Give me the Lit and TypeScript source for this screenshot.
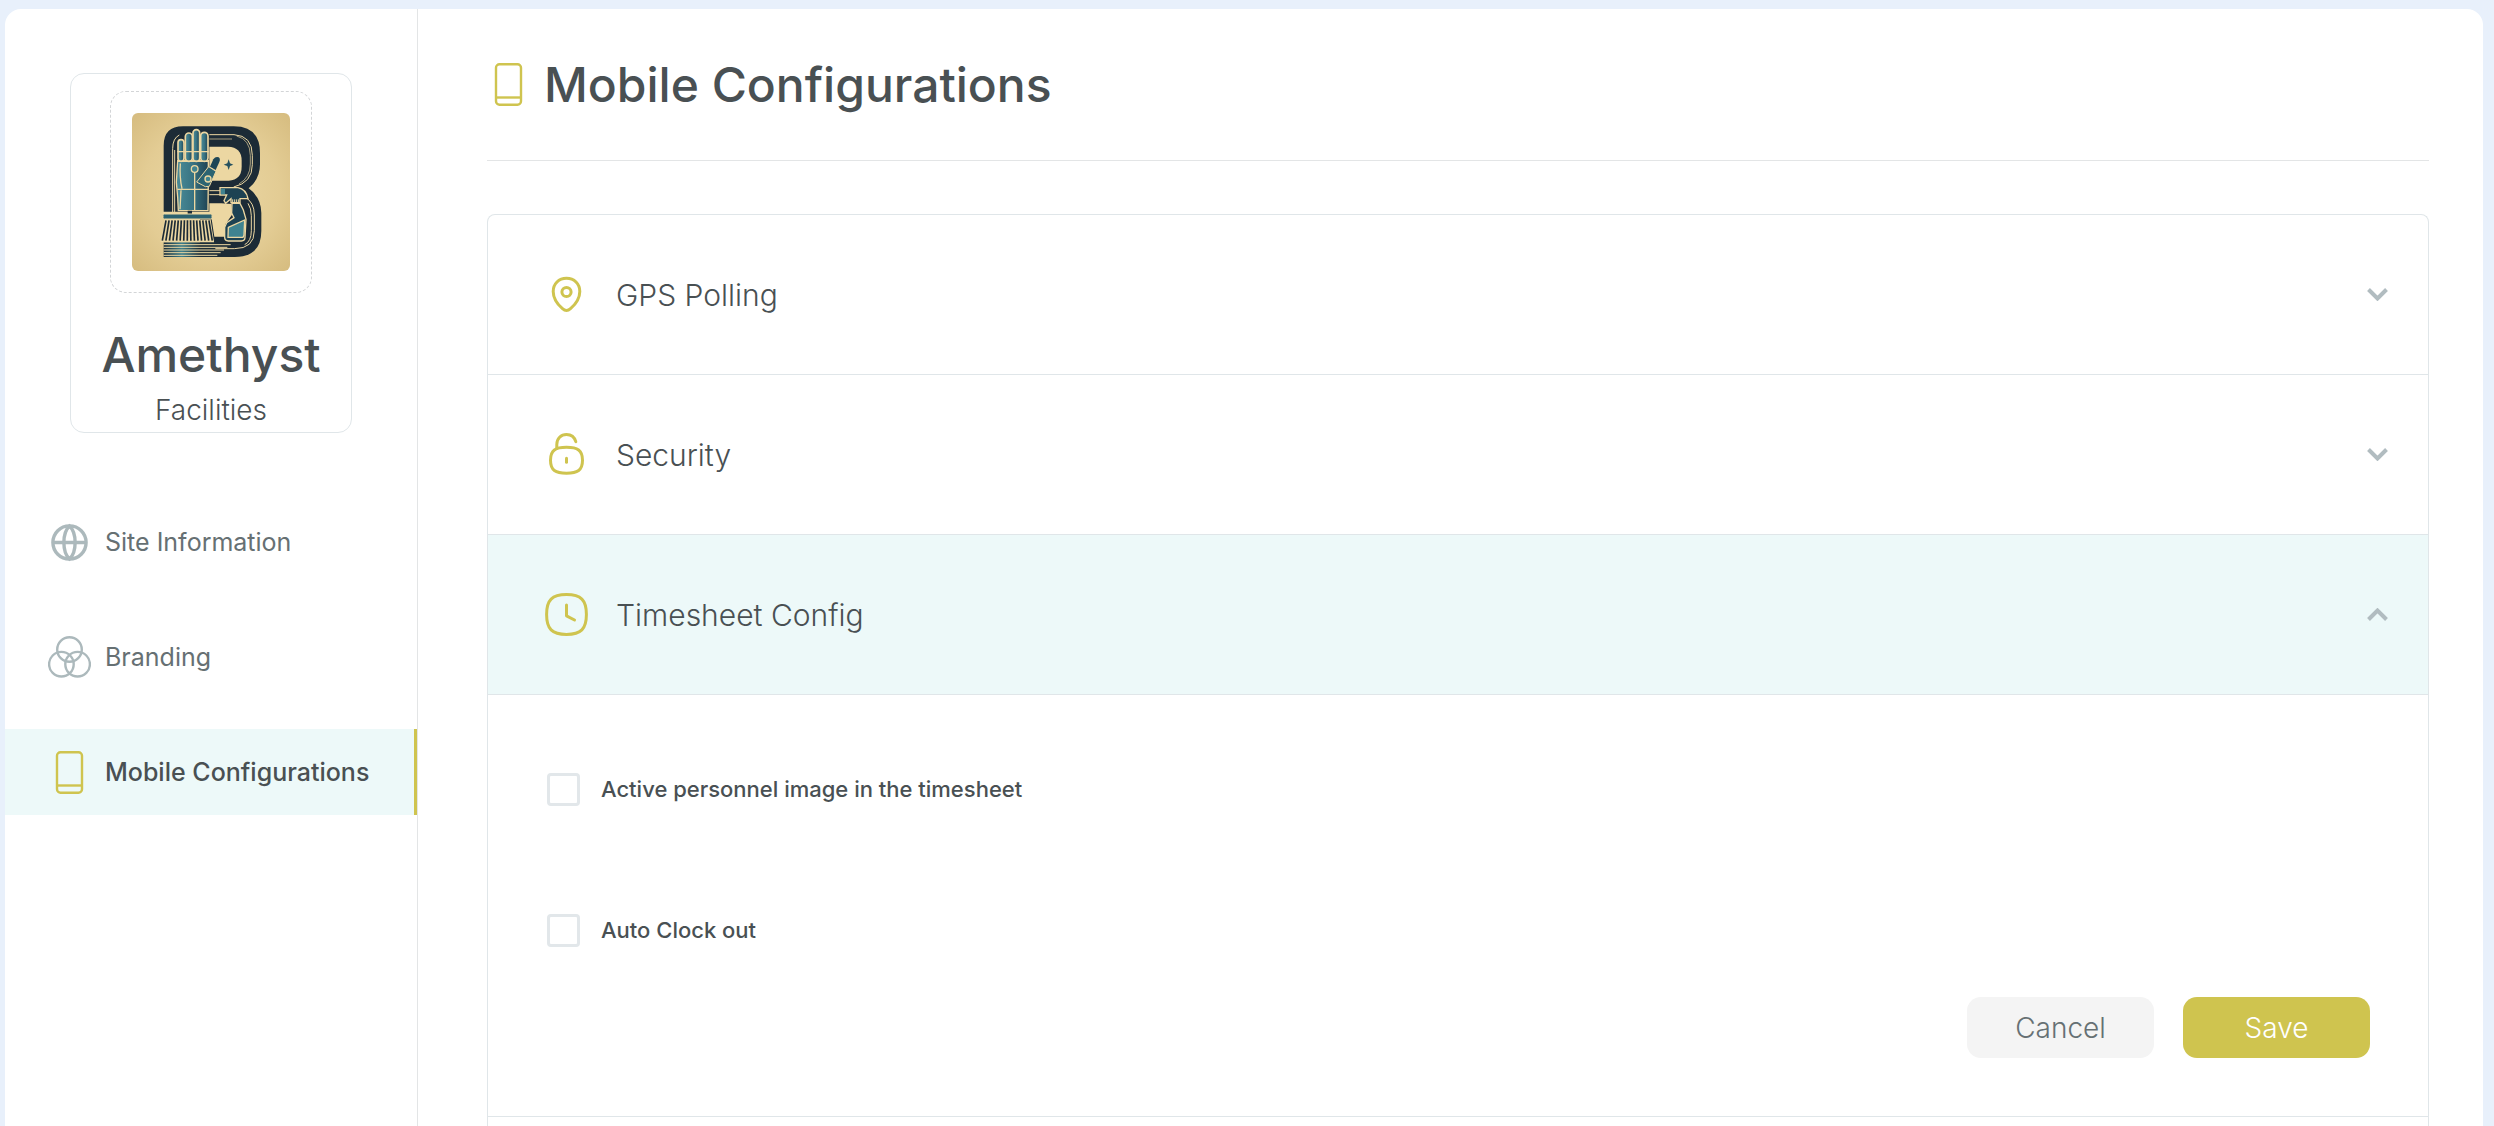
import { LitElement, html, svg, css, nothing } from "lit";
import { customElement, state } from "lit/decorators.js";
import { classMap } from "lit/directives/class-map.js";

const phoneIcon = html`<svg class="icon" viewBox="0 0 43 43" aria-hidden="true">
  <rect x="9" y="1.200" width="25" height="40.600" rx="3.500"></rect>
  <path d="M9 34.5h25"></path>
</svg>`;

const globeIcon = html`<svg class="icon globe" viewBox="0 0 43 43" aria-hidden="true">
  <circle cx="21.5" cy="21.5" r="16.600"></circle>
  <path d="M21.500 5C14 12 14 31 21.500 38 29 31 29 12 21.500 5Z"></path>
  <path d="M5 21.5h33"></path>
</svg>`;

const brandingIcon = html`<svg class="icon" viewBox="0 0 43 43" aria-hidden="true">
  <circle cx="21.5" cy="13.5" r="12.300"></circle>
  <circle cx="13.4" cy="28.2" r="12.300"></circle>
  <circle cx="29.6" cy="28.2" r="12.300"></circle>
</svg>`;

const pinIcon = html`<svg class="icon section" viewBox="0 0 43 43" aria-hidden="true">
  <path d="M21.5 5.2C13.8 5.2 8.2 10.8 8.2 18.4c0 7.700 4.500 13 9.300 17.300 2.500 2.200 5.500 2.200 8 0 4.800-4.300 9.300-9.600 9.300-17.300C34.800 10.800 29.200 5.200 21.500 5.200Z"></path>
  <circle cx="21.500" cy="19" r="4.600"></circle>
</svg>`;

const lockIcon = html`<svg class="icon section" viewBox="0 0 43 43" aria-hidden="true">
  <path d="M11.800 15.500V11.500C11.800 5.500 16 1.500 21.500 1.500c4.500 0 8 2.600 9.300 7.200"></path>
  <path d="M21.500 14.200c-11 0-16 3-16 13s5 13 16 13 16-3 16-13-5-13-16-13Z"></path>
  <path d="M21.500 25.300v4"></path>
</svg>`;

const clockIcon = html`<svg class="icon section" viewBox="0 0 43 43" aria-hidden="true">
  <path d="M21.500 1.600C7 1.600 1.600 7 1.600 21.500S7 41.400 21.500 41.400 41.400 36 41.400 21.500 36 1.600 21.500 1.600Z"></path>
  <path d="M21.500 12v10.800l8 4.200"></path>
</svg>`;

const fingers = [
  { x: 174, y: 119, w: 18 },
  { x: 196, y: 99, w: 21 },
  { x: 219, y: 89, w: 20 },
  { x: 242, y: 97, w: 22 },
];
const bristles = Array.from({ length: 15 }, (_, i) => i);
const stripes = [434, 442, 450, 458, 466];

/** Company emblem: a letter B built from a glove, a broom and a spray bottle. */
const emblem = html`<svg class="emblem" viewBox="36 39 474 474" role="img" aria-label="Amethyst logo">
  <defs>
    <radialGradient id="paper" cx="50%" cy="50%" r="72%">
      <stop offset="0" stop-color="#ecd9a6"></stop>
      <stop offset="0.600" stop-color="#e3cc94"></stop>
      <stop offset="1" stop-color="#d5bb7e"></stop>
    </radialGradient>
    <linearGradient id="teal" x1="0" x2="1">
      <stop offset="0" stop-color="#4b8c98"></stop>
      <stop offset="0.500" stop-color="#397483"></stop>
      <stop offset="1" stop-color="#1f4354"></stop>
    </linearGradient>
    <linearGradient id="fade" x1="0" x2="1">
      <stop offset="0" stop-color="#1c2d38"></stop>
      <stop offset="0.350" stop-color="#3f7f8c"></stop>
      <stop offset="0.700" stop-color="#1c2d38"></stop>
    </linearGradient>
  </defs>
  <rect x="36" y="39" width="474" height="474" fill="url(#paper)"></rect>
  <path fill="#1c2b36" d="M131 336V137q0-58 58-58h152q79 0 79 80v34q0 44-34 72 38 28 38 74v53q0 79-80 79H240V336Z"></path>
  <path fill="#ecd7a2" d="M268 140h56q41 1 41 42v18q0 39-39 42h-58Z"></path>
  <path fill="#ecd7a2" d="M268 310h36l30 2 2 32-21 30v36h-32l-8-52h-7Z"></path>
  <g fill="none" stroke="#ecd7a2" stroke-width="3">
    <path d="M268 104h74q55 3 55 62v28q0 54-56 67"></path>
    <path d="M268 117h68" stroke-width="2"></path>
    <path d="M350 108q40 10 41 58v26q0 40-34 60" stroke-width="2"></path>
    <path d="M158 336V146q0-31 20-41M164 336V150"></path>
    <path d="M268 272h34M268 284h34M375 291q28 16 28 54v47q0 54-60 54H284M384 310q10 15 10 37v45q0 32-20 42"></path>
  </g>
  <path fill="url(#fade)" d="M131 427h155v44H131Z"></path>
  <path fill="#ecd7a2" d="M122 422h160v5H122Z"></path>
  <g stroke="#ecd7a2" stroke-width="3">
    ${stripes.map((y, i) => svg`<path d=${`M131 ${y}H${332 - i * 10}`}></path>`)}
  </g>
  <path fill="url(#teal)" stroke="#ecd7a2" stroke-width="4" d="M173 182h92v46l-1 104h-89l-2-40-4-45Z"></path>
  ${fingers.map(
    (f) => svg`<rect x=${f.x} y=${f.y} width=${f.w} height=${184 - f.y} rx=${f.w / 2}
      fill="url(#teal)" stroke="#ecd7a2" stroke-width="5"></rect>`,
  )}
  <path fill="none" stroke="#ecd7a2" stroke-width="4" d="M172 155h94M172 184h94M172 268h94M224 216v115M181 190q-3 40 5 76M183 271l-3 57"></path>
  <path fill="#1e4656" d="m270 200 10-22q7-10 16-6 6 4 2 14l-11 24Z"></path>
  <path fill="#2c6472" stroke="#ecd7a2" stroke-width="3" d="m230 246 36-46 22 14-20 45-12 1Z"></path>
  <circle cx="264" cy="237" r="9" fill="#3f8390" stroke="#ecd7a2" stroke-width="4"></circle>
  <circle cx="224" cy="207" r="10" fill="#3f8390" stroke="#ecd7a2" stroke-width="4"></circle>
  <path fill="#25515f" d="m326 178 4 12 10 4-10 4-4 12-4-12-11-4 11-4Z"></path>
  <path fill="#ecd7a2" d="M128 335h148v8H128Z"></path>
  <path fill="#1c2d38" d="M203 332h13v12h-13Z"></path>
  <rect x="129" y="342" width="147" height="15" rx="4" fill="#2c6270" stroke="#ecd7a2" stroke-width="3"></rect>
  <path fill="#ecd7a2" d="M134 359h138l10 66H122Z"></path>
  <g stroke="#1c2b36" stroke-width="5">
    ${bristles.map((i) => svg`<path d=${`M${138 + i * 9.200} 361 ${127 + i * 10.700} 422`}></path>`)}
  </g>
  <path fill="#1c2b36" d="M286 411h23v12h-23Z"></path>
  <path fill="#1d4253" stroke="#ecd7a2" stroke-width="4" d="M300 263h54q24 4 30 33h-24v12h-27v-12l-16 14-5-8 8-17h-20Z"></path>
  <path fill="#3f8390" d="M303 266h12v17h-12Z"></path>
  <path fill="none" stroke="#ecd7a2" stroke-width="3" d="M338 298v10M344 298v10M350 298v10M356 298v10"></path>
  <path fill="#1d4253" stroke="#ecd7a2" stroke-width="4" d="M336 310h24l10 20 8 28-3 54q0 11-11 11h-39q-11 0-11-11v-30l6-14 22-15-7-14Z"></path>
  <path fill="#3f8390" stroke="#ecd7a2" stroke-width="4" d="m325 382 49-22-2 46-3 6h-45Z"></path>
</svg>`;

interface Section {
  id: string;
  title: string;
  icon: unknown;
}

const sections: Section[] = [
  { id: "gps", title: "GPS Polling", icon: pinIcon },
  { id: "security", title: "Security", icon: lockIcon },
  { id: "timesheet", title: "Timesheet Config", icon: clockIcon },
];

const navItems = [
  { label: "Site Information", href: "#site", icon: globeIcon, active: false },
  { label: "Branding", href: "#branding", icon: brandingIcon, active: false },
  { label: "Mobile Configurations", href: "#mobile", icon: phoneIcon, active: true },
];

@customElement("app-root")
export class AppRoot extends LitElement {
  @state() private open = "timesheet";

  static styles = css`
    :host {
      --accent: #cfc44f;
      --ink: #495053;
      --muted: #667073;
      --line: #e0e6e9;
      --tint: #edf9f9;
      display: block;
      background: #e8f0fb;
      color: var(--ink);
      font-family: Inter, "Liberation Sans", sans-serif;
    }
    * {
      box-sizing: border-box;
    }
    .page {
      display: flex;
      min-height: 100vh;
      padding: 9px 11px 0 5px;
    }
    .panel {
      display: flex;
      flex: 1;
      background: #fff;
      border-radius: 16px 16px 0 0;
    }
    .sidebar {
      flex: none;
      width: 413px;
      padding-top: 64px;
      border-right: 1px solid #e3e5e6;
    }
    .brand {
      display: flex;
      flex-direction: column;
      align-items: center;
      width: 282px;
      margin: 0 auto 66px;
      padding: 17px 0 4px;
      border: 1px solid var(--line);
      border-radius: 14px;
    }
    .frame {
      padding: 21px;
      border: 1px dashed #d3d5d7;
      border-radius: 16px;
    }
    .emblem {
      display: block;
      width: 158px;
      height: 158px;
      border-radius: 6px;
    }
    .company {
      margin: 32px 0 0;
      font-size: 48px;
      font-weight: 500;
      line-height: 60px;
    }
    .kind {
      margin: 7px 0 0;
      font-size: 28px;
      font-weight: 300;
      line-height: 36px;
    }
    .nav {
      display: flex;
      flex-direction: column;
      gap: 29px;
    }
    .link {
      display: flex;
      align-items: center;
      gap: 14px;
      height: 86px;
      padding-left: 43px;
      border-right: 3px solid transparent;
      color: var(--muted);
      font-size: 25px;
      font-weight: 400;
      text-decoration: none;
      white-space: nowrap;
    }
    .link .icon {
      color: #acb9bc;
    }
    .link.active {
      background: var(--tint);
      border-color: var(--accent);
      color: var(--ink);
      font-weight: 500;
    }
    .link.active .icon {
      color: var(--accent);
    }
    .icon {
      flex: none;
      width: 43px;
      height: 43px;
      fill: none;
      stroke: currentColor;
      stroke-width: 2.4;
      color: var(--accent);
    }
    .icon.globe {
      stroke-width: 3.4;
    }
    .icon.section {
      stroke-width: 3;
      stroke-linecap: round;
      stroke-linejoin: round;
    }
    .main {
      display: flex;
      flex: 1;
      flex-direction: column;
      min-width: 0;
      padding: 0 54px 0 69px;
    }
    .header {
      display: flex;
      align-items: center;
      gap: 14px;
      height: 152px;
      margin-bottom: 53px;
      border-bottom: 1px solid #e3e5e6;
    }
    .title {
      margin: 0;
      font-size: 48px;
      font-weight: 500;
      line-height: 60px;
    }
    .accordion {
      flex: 1;
      border: 1px solid var(--line);
      border-bottom: 0;
      border-radius: 8px 8px 0 0;
      overflow: hidden;
    }
    .heading {
      margin: 0;
      border-bottom: 1px solid var(--line);
    }
    .toggle {
      display: flex;
      align-items: center;
      gap: 28px;
      width: 100%;
      height: 159px;
      padding: 0 40px 0 57px;
      border: 0;
      background: none;
      color: inherit;
      font: inherit;
      font-size: 30px;
      font-weight: 300;
      text-align: left;
      cursor: pointer;
    }
    .toggle.open {
      background: var(--tint);
    }
    .label {
      flex: 1;
    }
    .chevron {
      width: 21px;
      height: 13px;
      fill: none;
      stroke: #b1bcc0;
      stroke-width: 4;
    }
    .settings {
      padding: 78px 58px 58px 59px;
      border-bottom: 1px solid var(--line);
    }
    .options {
      display: flex;
      flex-direction: column;
      align-items: flex-start;
      gap: 108px;
    }
    .option {
      display: flex;
      align-items: center;
      gap: 21px;
      font-size: 22px;
      font-weight: 500;
      line-height: 33px;
    }
    .box {
      appearance: none;
      width: 33px;
      height: 33px;
      margin: 0;
      border: 3px solid #e2e7ea;
      border-radius: 4px;
      background: #fff;
    }
    .box:checked {
      background: var(--accent);
      border-color: var(--accent);
    }
    .actions {
      display: flex;
      justify-content: flex-end;
      gap: 29px;
      margin-top: 50px;
    }
    .button {
      width: 187px;
      height: 61px;
      border: 0;
      border-radius: 14px;
      font: inherit;
      font-size: 28px;
      font-weight: 300;
      cursor: pointer;
    }
    .cancel {
      background: #f4f4f4;
      color: var(--muted);
    }
    .save {
      background: var(--accent);
      color: #fff;
    }
  `;

  private toggle(id: string) {
    this.open = this.open === id ? "" : id;
  }

  private renderSettings() {
    return html`<form class="settings" @submit=${(e: Event) => e.preventDefault()}>
      <div class="options">
        <label class="option" for="image">
          <input class="box" type="checkbox" id="image" />
          Active personnel image in the timesheet
        </label>
        <label class="option" for="clock">
          <input class="box" type="checkbox" id="clock" />
          Auto Clock out
        </label>
      </div>
      <div class="actions">
        <button class="button cancel" type="reset">Cancel</button>
        <button class="button save" type="submit">Save</button>
      </div>
    </form>`;
  }

  private renderSection(section: Section) {
    const open = this.open === section.id;
    return html`
      <h2 class="heading">
        <button
          class=${classMap({ toggle: true, open })}
          aria-expanded=${open ? "true" : "false"}
          @click=${() => this.toggle(section.id)}
        >
          ${section.icon}
          <span class="label">${section.title}</span>
          <svg class="chevron" viewBox="0 0 21 13" aria-hidden="true">
            <path d=${open ? "M1.500 11.500 10.500 2.500 19.500 11.500" : "M1.500 1.500 10.500 10.500 19.500 1.500"}></path>
          </svg>
        </button>
      </h2>
      ${open && section.id === "timesheet" ? this.renderSettings() : nothing}
    `;
  }

  render() {
    return html`<div class="page">
      <div class="panel">
        <aside class="sidebar">
          <div class="brand">
            <div class="frame">${emblem}</div>
            <p class="company">Amethyst</p>
            <p class="kind">Facilities</p>
          </div>
          <nav class="nav">
            ${navItems.map(
              (item) => html`<a
                class=${classMap({ link: true, active: item.active })}
                href=${item.href}
                aria-current=${item.active ? "page" : nothing}
                >${item.icon}<span>${item.label}</span></a
              >`,
            )}
          </nav>
        </aside>
        <main class="main">
          <header class="header">
            ${phoneIcon}
            <h1 class="title">Mobile Configurations</h1>
          </header>
          <div class="accordion">${sections.map((s) => this.renderSection(s))}</div>
        </main>
      </div>
    </div>`;
  }
}
